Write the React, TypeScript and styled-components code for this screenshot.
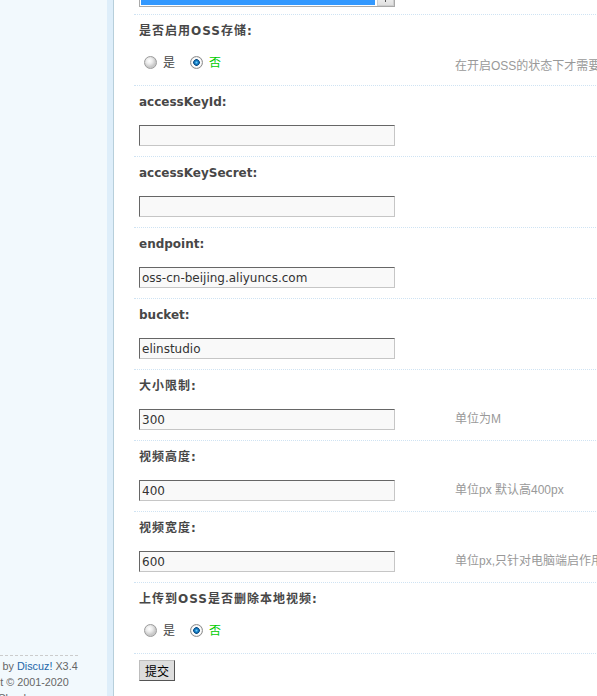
import React from 'react';
import styled, { createGlobalStyle } from 'styled-components';

const GlobalStyle = createGlobalStyle`
  html, body {
    margin: 0;
    padding: 0;
    overflow: hidden;
  }
  body {
    font: 12px/18px "DejaVu Sans", "Noto Sans CJK SC", sans-serif;
    color: #333;
    background: #fff;
  }
`;

type TextField = {
  key: string;
  label: string;
  value: string;
  tip?: string;
  cjk?: boolean;
};

const textFields: TextField[] = [
  { key: 'id', label: 'accessKeyId:', value: '' },
  { key: 'secret', label: 'accessKeySecret:', value: '' },
  { key: 'endpoint', label: 'endpoint:', value: 'oss-cn-beijing.aliyuncs.com' },
  { key: 'bucket', label: 'bucket:', value: 'elinstudio' },
  { key: 'size', label: '大小限制:', value: '300', tip: '单位为M', cjk: true },
  {
    key: 'height',
    label: '视频高度:',
    value: '400',
    tip: '单位px 默认高400px',
    cjk: true,
  },
  {
    key: 'width',
    label: '视频宽度:',
    value: '600',
    tip: '单位px,只针对电脑端启作用',
    cjk: true,
  },
];

const RadioGroup = ({ name }: { name: string }) => (
  <RadioList>
    <RadioOption>
      <Radio type="radio" name={name} readOnly />
      <span>是</span>
    </RadioOption>
    <RadioOption $checked>
      <Radio type="radio" name={name} defaultChecked />
      <span>否</span>
    </RadioOption>
  </RadioList>
);

const App = () => {
  return (
    <>
      <GlobalStyle />
      <Page>
        <Sidebar>
          <MenuSpace />
          <Copyright>
            <CopyrightText>
              <div>
                Powered by <a href="#">Discuz!</a> X3.4
              </div>
              <div>Copyright © 2001-2020</div>
              <div>Tencent Cloud.</div>
            </CopyrightText>
          </Copyright>
        </Sidebar>
        <Divider />
        <Main>
          <Form>
            <TopRow>
              <ListBox>
                <Options>
                  <Option>
                    <span>用户组 处理后台</span>
                  </Option>
                </Options>
                <ScrollBar>
                  <ScrollButton />
                </ScrollBar>
              </ListBox>
            </TopRow>

            <Section>
              <LabelRow $cjk>是否启用OSS存储:</LabelRow>
              <FieldRow>
                <FieldCell $radio>
                  <RadioGroup name="enable" />
                </FieldCell>
                <TipCell $pad={12}>在开启OSS的状态下才需要配置</TipCell>
              </FieldRow>
            </Section>

            {textFields.map((field) => (
              <Section key={field.key}>
                <LabelRow $cjk={field.cjk}>{field.label}</LabelRow>
                <FieldRow>
                  <FieldCell>
                    <TextInput defaultValue={field.value} />
                  </FieldCell>
                  <TipCell $pad={10}>{field.tip}</TipCell>
                </FieldRow>
              </Section>
            ))}

            <Section>
              <LabelRow $cjk>上传到OSS是否删除本地视频:</LabelRow>
              <FieldRow>
                <FieldCell $radio>
                  <RadioGroup name="remove" />
                </FieldCell>
                <TipCell $pad={12} />
              </FieldRow>
            </Section>

            <SubmitRow>
              <SubmitButton type="button">提交</SubmitButton>
            </SubmitRow>
          </Form>
        </Main>
      </Page>
    </>
  );
};

const Page = styled.div`
  display: flex;
  height: 100vh;
  overflow: hidden;
`;

const Sidebar = styled.aside`
  width: 107px;
  flex: none;
  display: flex;
  flex-direction: column;
  background: #f2f9fd;
`;

const MenuSpace = styled.div`
  flex: 1;
`;

const Copyright = styled.div`
  flex: none;
  width: 78px;
  height: 41px;
  box-sizing: border-box;
  border-top: 1px dashed #ccc;
  padding-top: 2px;
  display: flex;
  justify-content: flex-end;
`;

const CopyrightText = styled.div`
  flex: none;
  width: 121px;
  font: 10.8px/16px "Liberation Sans", Arial, sans-serif;
  color: #666;
  white-space: nowrap;

  a {
    color: #2366a8;
    text-decoration: none;
  }
`;

const Divider = styled.div`
  width: 6px;
  flex: none;
  background: #deeefa;
  border-right: 1px solid #b7cfdb;
`;

const Main = styled.main`
  flex: 1;
  min-width: 0;
  overflow: hidden;
  padding-left: 20px;
  background: #fff;
`;

const Form = styled.div`
  width: 760px;
`;

const TopRow = styled.div`
  padding: 0 5px 7px;
`;

const ListBox = styled.div`
  width: 256px;
  height: 7px;
  box-sizing: border-box;
  display: flex;
  border: 1px solid #a9a9a9;
  border-top: none;
  background: #fff;
  overflow: hidden;
`;

const Options = styled.div`
  flex: 1;
  padding: 0 2px 1px 1px;
  display: flex;
  flex-direction: column;
  justify-content: flex-end;
`;

const Option = styled.div`
  height: 5px;
  background: #3399ff;
  color: #fff;
  padding-left: 26px;
  display: flex;
  align-items: flex-end;
  overflow: hidden;
  white-space: nowrap;

  span {
    flex: none;
    font-size: 12px;
    line-height: 21px;
  }
`;

const ScrollBar = styled.div`
  width: 17px;
  flex: none;
  background: #f0f0f0;
  display: flex;
`;

const ScrollButton = styled.div`
  flex: 1;
  border: 1px solid #cfcfcf;
  border-top: none;
  background: linear-gradient(#eaeaea, #e0e0e0);
  display: flex;
  justify-content: center;

  &::after {
    content: '';
    width: 1px;
    height: 2px;
    background: #555;
  }
`;

const Section = styled.section`
  border-top: 1px dotted #cfe3f3;
`;

const LabelRow = styled.div<{ $cjk?: boolean }>`
  padding: 7px 5px 5px;
  font-weight: 700;
  color: #474747;
  letter-spacing: ${({ $cjk }) => ($cjk ? '1px' : '0')};
`;

const FieldRow = styled.div`
  display: grid;
  grid-template-columns: 316px 1fr;
`;

const FieldCell = styled.div<{ $radio?: boolean }>`
  padding: ${({ $radio }) => ($radio ? '9px 5px 15px' : '9px 5px 10px')};
`;

const TipCell = styled.div<{ $pad: number }>`
  padding: ${({ $pad }) => $pad}px 5px 0;
  font: 12px/18px "Liberation Sans", "Noto Sans CJK SC", sans-serif;
  color: #999;
  white-space: nowrap;
`;

const TextInput = styled.input`
  display: block;
  width: 256px;
  height: 21px;
  box-sizing: border-box;
  margin: 0;
  padding: 0 2px;
  border: 1px solid #c6c6c6;
  border-top-color: #666;
  border-left-color: #666;
  background: #f9f9f9;
  color: #333;
  font: 12px/19px "DejaVu Sans", "Noto Sans CJK SC", sans-serif;
  outline: none;
`;

const RadioList = styled.div`
  display: flex;
  align-items: center;
  gap: 15px;
  height: 16px;
  padding-left: 5px;
`;

const RadioOption = styled.label<{ $checked?: boolean }>`
  display: inline-flex;
  align-items: center;
  gap: 6px;
  font: 12px/16px "Noto Sans CJK SC", sans-serif;
  color: ${({ $checked }) => ($checked ? '#00cc00' : '#444')};
`;

const Radio = styled.input`
  appearance: none;
  -webkit-appearance: none;
  margin: 0;
  width: 13px;
  height: 13px;
  box-sizing: border-box;
  border-radius: 50%;
  border: 1px solid #9c9c9c;
  background: radial-gradient(
    circle at 40% 35%,
    #ffffff 0,
    #ececec 3px,
    #c9c9c9 6px
  );

  &:checked {
    border-color: #8e8e8e;
    background: radial-gradient(
      circle at 50% 50%,
      #6fd0ff 0,
      #1a86cc 1.5px,
      #0b4d86 3px,
      #f4f4f4 3.6px,
      #ffffff 4.5px,
      #cfcfcf 6px
    );
  }
`;

const SubmitRow = styled.div`
  border-top: 1px dotted #cfe3f3;
  padding: 6px 5px 20px;
`;

const SubmitButton = styled.button`
  margin: 0;
  padding: 2px 5px;
  height: 21px;
  box-sizing: border-box;
  background: #ddd;
  border: 1px solid;
  border-color: #bdbdbd #555 #555 #bdbdbd;
  color: #000;
  font: 12px/15px "Noto Sans CJK SC", sans-serif;
  cursor: pointer;
`;

export default App;
